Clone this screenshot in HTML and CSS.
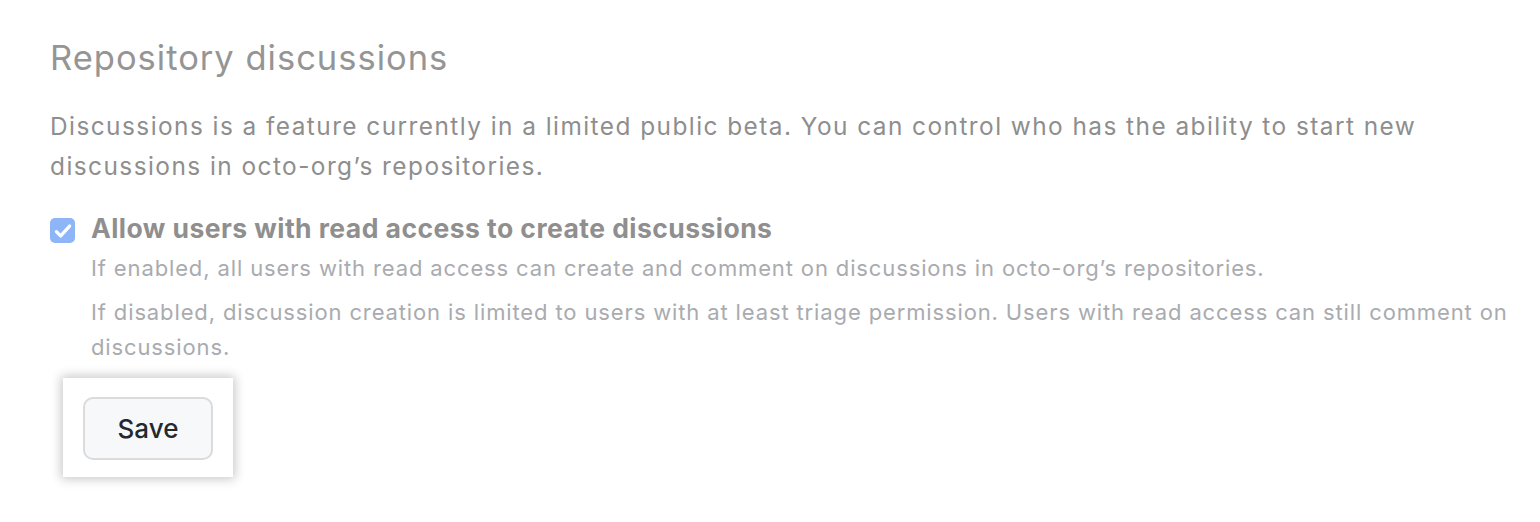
FILE: index.html
```html
<!DOCTYPE html>
<html>
<head>
<meta charset="utf-8">
<link rel="stylesheet" href="styles.css">
</head>
<body>
<div class="page">
  <h2 class="title">Repository discussions</h2>
  <p class="lead">Discussions is a feature currently in a limited public beta. You can control who has the ability to start new discussions in octo-org’s repositories.</p>
  <div class="option">
    <span class="checkbox">
      <svg viewBox="0 0 16 16"><path d="M3.2 8.5l3.1 3.1 6.5-7.2" fill="none" stroke="#fff" stroke-width="2.4" stroke-linecap="round" stroke-linejoin="round"/></svg>
    </span>
    <div class="option-body">
      <div class="option-label">Allow users with read access to create discussions</div>
      <p class="note">If enabled, all users with read access can create and comment on discussions in octo-org’s repositories.</p>
      <p class="note">If disabled, discussion creation is limited to users with at least triage permission. Users with read access can still comment on discussions.</p>
    </div>
  </div>
  <div class="highlight">
    <button class="btn">Save</button>
  </div>
</div>
</body>
</html>
```
FILE: styles.css
```css
html, body {
  margin: 0;
  background: #fff;
}
.page {
  padding: 36px 12px 40px 50px;
  font-family: Inter, "Liberation Sans", Arial, sans-serif;
}
.title {
  margin: 0;
  font-size: 34.5px;
  font-weight: 400;
  line-height: 44px;
  letter-spacing: 1px;
  color: #959595;
}
.lead {
  margin: 26px 0 0;
  font-size: 24.4px;
  line-height: 40px;
  letter-spacing: 1.45px;
  color: #8e8e8e;
  max-width: 1380px;
}
.option {
  display: flex;
  gap: 16px;
  margin-top: 26px;
}
.checkbox {
  flex: none;
  width: 25px;
  height: 25px;
  border-radius: 5px;
  background: #8db5f7;
  display: flex;
  align-items: center;
  justify-content: center;
  margin-top: 6px;
}
.checkbox svg {
  width: 22px;
  height: 22px;
}
.option-label {
  font-size: 26.5px;
  font-weight: 700;
  line-height: 32px;
  letter-spacing: 0.45px;
  color: #8f8f8f;
}
.note {
  margin: 6.5px 0 0;
  font-size: 22px;
  line-height: 35px;
  letter-spacing: 0.87px;
  color: #a9abaf;
}
.note + .note {
  margin-top: 9px;
}
.highlight {
  margin: 13.5px 0 0 13px;
  width: 130px;
  padding: 19px 20px 17px;
  background: #fff;
  box-shadow: 0 0 10px 2px rgba(0,0,0,0.22);
}
.btn {
  display: block;
  width: 130px;
  height: 63px;
  border: 2px solid #d9dbdd;
  border-radius: 10px;
  background: #f6f8fa;
  font-family: Inter, "Liberation Sans", Arial, sans-serif;
  font-size: 26px;
  font-weight: 500;
  color: #24292e;
  padding: 0;
}
```
